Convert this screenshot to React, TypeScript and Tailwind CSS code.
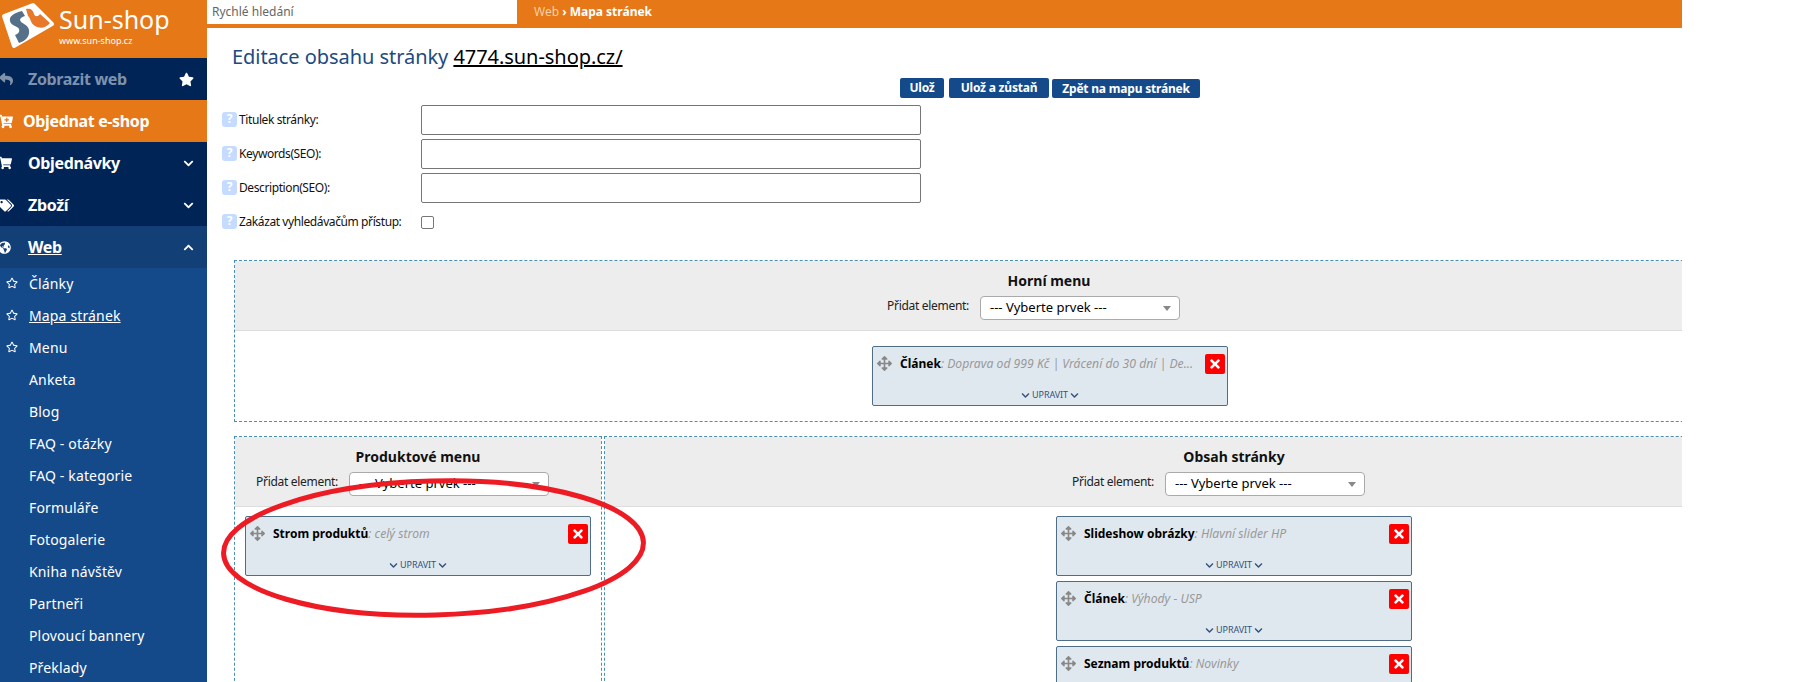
import { FaArrowsAlt, FaCartPlus, FaChevronDown, FaChevronUp, FaGlobeAmericas, FaRegStar, FaReply, FaShoppingCart, FaStar, FaTags, FaTimes } from 'react-icons/fa';

const FONT = "font-['Noto_Sans','Open_Sans',sans-serif]";

function Logo() {
  return (
    <svg width="56" height="52" viewBox="0 0 56 52" className="shrink-0">
      <polygon points="33,5 52,24 14,46 4,16" fill="#fff" stroke="#fff" strokeWidth="4" strokeLinejoin="round" />
      <path d="M22 11 C14 13 9 16 10 21 C11 26 18 26 19 29 C20 32 18 34 15 35 L19 43 C26 41 30 36 29 30 C28 24 21 24 20 20 C20 18 22 17 25 16 Z" fill="#56708a" />
      <path d="M26 9 C31 8 33 10 34 14 C35 17 38 17 40 14 L50 23 C46 28 40 29 35 26 C30 23 31 18 28 16 Z" fill="#e8782a" />
    </svg>
  );
}

function SideRow({ label, icon, bg, text = 'text-white', right, underline, indent = 'pl-[28px]' }: { label: string; icon: React.ReactNode; bg: string; text?: string; right?: React.ReactNode; underline?: boolean; indent?: string }) {
  return (
    <div className={`h-[42px] flex items-center ${bg} ${indent} relative`}>
      <span className="absolute left-0 top-0 h-full flex items-center">{icon}</span>
      <span className={`text-[16px] font-bold tracking-[-0.35px] ${text} ${underline ? 'underline' : ''}`}>{label}</span>
      {right && <span className="absolute right-[13px] top-0 h-full flex items-center">{right}</span>}
    </div>
  );
}

function SubItem({ label, star, underline }: { label: string; star?: boolean; underline?: boolean }) {
  return (
    <div className="h-[32px] flex items-center pl-[29px] pb-[2px] relative text-[14px] tracking-[0.15px] text-white">
      {star && <FaRegStar size={12} className="absolute left-[6px] top-[9px]" />}
      <span className={underline ? 'underline' : ''}>{label}</span>
    </div>
  );
}

function Sidebar() {
  const down = <FaChevronDown size={11} className="text-white" />;
  return (
    <aside className="w-[207px] shrink-0 bg-[#154a8a] h-[682px] overflow-hidden">
      <div className="h-[58px] bg-[#e67817] flex items-start">
        <Logo />
        <div className="text-white ml-[3px]">
          <div className="text-[25px] leading-[30px] mt-[4px] font-normal">Sun-shop</div>
          <div className="text-[9px] leading-[10px] mt-[2px]">www.sun-shop.cz</div>
        </div>
      </div>
      <SideRow label="Zobrazit web" bg="bg-[#012456]" text="text-[#7f92ab]" icon={<FaReply size={14} className="text-[#7f92ab] -ml-[1px]" />} right={<FaStar size={15} className="text-white" />} />
      <SideRow label="Objednat e-shop" bg="bg-[#e67817]" indent="pl-[23px]" icon={<FaCartPlus size={15} className="text-white -ml-[2px]" />} />
      <SideRow label="Objednávky" bg="bg-[#012456]" icon={<FaShoppingCart size={14} className="text-white -ml-[2px]" />} right={down} />
      <SideRow label="Zboží" bg="bg-[#012456]" icon={<FaTags size={15} className="text-white -ml-[1px]" />} right={down} />
      <SideRow label="Web" underline bg="bg-[#123f75]" icon={<FaGlobeAmericas size={13} className="text-white -ml-[2px]" />} right={<FaChevronUp size={11} className="text-white" />} />
      <SubItem label="Články" star />
      <SubItem label="Mapa stránek" star underline />
      <SubItem label="Menu" star />
      {['Anketa', 'Blog', 'FAQ - otázky', 'FAQ - kategorie', 'Formuláře', 'Fotogalerie', 'Kniha návštěv', 'Partneři', 'Plovoucí bannery', 'Překlady'].map((s) => (
        <SubItem key={s} label={s} />
      ))}
    </aside>
  );
}

function FormRow({ label, children }: { label: string; children: React.ReactNode }) {
  return (
    <div className="flex items-start h-[34px]">
      <div className="w-[199px] flex items-center h-[30px] text-[12px] tracking-[-0.4px] text-[#111]">
        <span className="w-[15px] h-[15px] -mt-[2px] mr-[2px] rounded-[3px] bg-[#c5dbff] text-white text-[12px] tracking-normal font-bold leading-[14px] text-center">?</span>
        {label}
      </div>
      {children}
    </div>
  );
}

function AddElement() {
  return (
    <div className="flex items-start justify-center mt-[5px] pr-[31px] text-[12px] tracking-[-0.3px] text-[#222]">
      <span className="mr-[11px] leading-[20px]">Přidat element:</span>
      <div className="w-[200px] h-[24px] bg-white border border-[#aaa] rounded-[4px] flex items-center pl-[9px] text-[13px] tracking-normal text-black relative">
        --- Vyberte prvek ---
        <span className="absolute right-[8px] top-[9px] w-0 h-0 border-l-[4px] border-r-[4px] border-t-[5px] border-l-transparent border-r-transparent border-t-[#888]" />
      </div>
    </div>
  );
}

function Card({ title, note, narrow }: { title: string; note: string; narrow?: boolean }) {
  return (
    <div className={`${narrow ? 'w-[346px]' : 'w-[356px]'} h-[60px] shrink-0 bg-[#e0e8ef] border border-[#4f6e85] rounded-[2px] relative`}>
      <FaArrowsAlt size={15} className="absolute left-[4px] top-[9px] text-[#888]" />
      <div className="absolute left-[27px] top-[8px] whitespace-nowrap text-[12px] leading-[18px]">
        <span className="font-bold text-black">{title}</span>
        <span className="italic text-[12.2px] text-[#999]">: {note}</span>
      </div>
      <div className="absolute right-[2px] top-[7px] w-5 h-5 rounded-[2px] bg-[#f00] flex items-center justify-center">
        <FaTimes size={14} className="text-white" />
      </div>
      <div className="absolute left-0 right-0 bottom-[4px] flex items-center justify-center gap-[2px] text-[9px] tracking-[-0.1px] leading-[12px] text-[#33527c]">
        <FaChevronDown size={9} />
        UPRAVIT
        <FaChevronDown size={9} />
      </div>
    </div>
  );
}

function Head({ title }: { title: string }) {
  return (
    <div className="h-[70px] bg-[#ededed] border-b border-[#ddd] pt-[10px] text-center">
      <div className="text-[14px] leading-[20px] font-bold text-[#111]">{title}</div>
      <AddElement />
    </div>
  );
}

export default function App() {
  return (
    <div className={`${FONT} w-[1795px] h-[682px] bg-white overflow-hidden`}>
      <div className="w-[1682px] h-[682px] flex overflow-hidden relative">
        <Sidebar />
        <main className="flex-1 min-w-0">
          <div className="h-[28px] bg-[#e67817] flex text-[12px]">
            <div className="w-[310px] h-[24px] bg-white pl-[5px] leading-[24px] text-[#666]">Rychlé hledání</div>
            <div className="ml-[17px] h-[24px] leading-[24px] text-[#f7cfa6]">
              Web <span className="text-white font-bold">› Mapa stránek</span>
            </div>
          </div>
          <h1 className="ml-[25px] mt-[14px] h-[30px] text-[20px] leading-[30px] tracking-[-0.05px] text-[#1d4a80]">
            Editace obsahu stránky <span className="text-black underline">4774.sun-shop.cz/</span>
          </h1>
          <div className="flex items-end ml-[693px] mt-[6px] h-[20px] text-[12px] tracking-[-0.2px] text-center text-white font-bold">
            <div className="w-[44px] h-[20px] bg-[#154a8a] rounded-[2px] leading-[20px]">Ulož</div>
            <div className="w-[100px] ml-[5px] h-[20px] bg-[#154a8a] rounded-[2px] leading-[20px]">Ulož a zůstaň</div>
            <div className="w-[148px] ml-[3px] h-[19px] bg-[#154a8a] rounded-[2px] leading-[19px]">Zpět na mapu stránek</div>
          </div>
          <div className="ml-[15px] mt-[7px]">
            <FormRow label="Titulek stránky:"><div className="w-[500px] h-[30px] border border-[#767676] rounded-[2px]" /></FormRow>
            <FormRow label="Keywords(SEO):"><div className="w-[500px] h-[30px] border border-[#767676] rounded-[2px]" /></FormRow>
            <FormRow label="Description(SEO):"><div className="w-[500px] h-[30px] border border-[#767676] rounded-[2px]" /></FormRow>
            <FormRow label="Zakázat vyhledávačům přístup:"><div className="w-[13px] h-[13px] mt-[9px] border border-[#767676] rounded-[2px]" /></FormRow>
          </div>
          <div className="ml-[27px] mt-[19px] w-[1630px]">
            <section className="h-[162px] border border-dashed border-[#4a8fb0]">
              <Head title="Horní menu" />
              <div className="flex justify-center pt-[15px] pl-[2px]"><Card title="Článek" note="Doprava od 999 Kč | Vrácení do 30 dní | De..." /></div>
            </section>
            <div className="flex mt-[14px] gap-[2px]">
              <section className="w-[368px] h-[260px] border border-dashed border-[#4a8fb0]">
                <Head title="Produktové menu" />
                <div className="flex justify-center pt-[9px]"><Card title="Strom produktů" note="celý strom" narrow /></div>
              </section>
              <section className="flex-1 h-[260px] border border-dashed border-[#4a8fb0]">
                <Head title="Obsah stránky" />
                <div className="flex flex-col items-center gap-[5px] pt-[9px]">
                  <Card title="Slideshow obrázky" note="Hlavní slider HP" />
                  <Card title="Článek" note="Výhody - USP" />
                  <Card title="Seznam produktů" note="Novinky" />
                </div>
              </section>
            </div>
          </div>
        </main>
        <svg className="absolute left-[219px] top-[476px] pointer-events-none" width="430" height="146" viewBox="0 0 430 146">
          <ellipse cx="214.5" cy="72" rx="210" ry="67" fill="none" stroke="#ed1c24" strokeWidth="5" transform="rotate(-1.5 214.5 72)" />
        </svg>
      </div>
    </div>
  );
}
